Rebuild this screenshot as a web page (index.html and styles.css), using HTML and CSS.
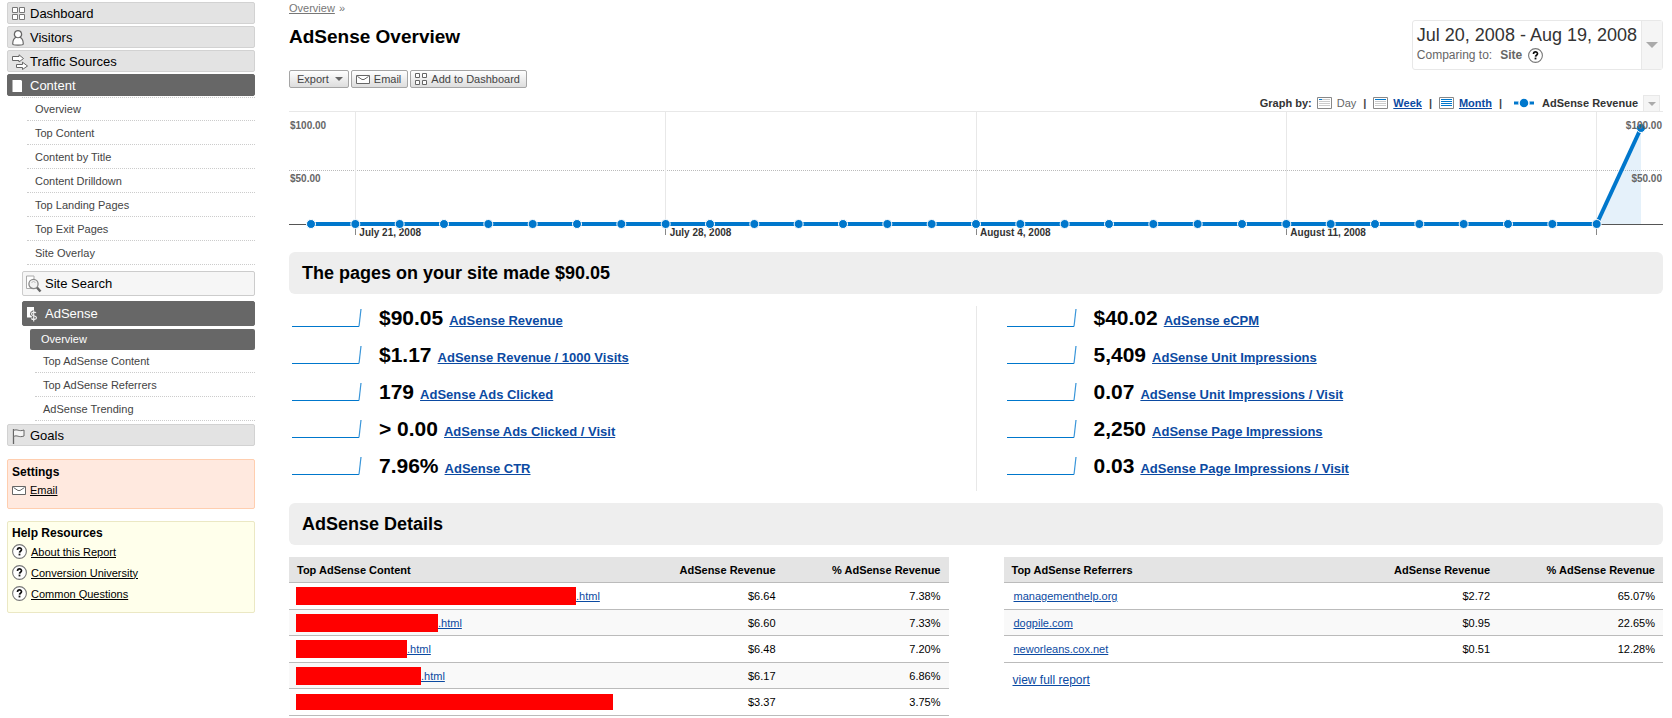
FILE: index.html
```html
<!DOCTYPE html>
<html lang="en">
<head>
<meta charset="utf-8">
<title>AdSense Overview</title>
<link rel="stylesheet" href="styles.css">
</head>
<body>
<svg class="defs" aria-hidden="true">
  <symbol id="i-grid" viewBox="0 0 12 12"><path d="M.5 .5h4v4h-4zM7.500 .5h4v4h-4zM.5 7.500h4v4h-4zM7.500 7.500h4v4h-4z" fill="#fff" stroke="#666"/></symbol>
  <symbol id="i-mail" viewBox="0 0 14 9"><path d="M.5 .5h13v8H.5z" fill="#fff" stroke="#666"/><path d="M1.500 1.500L6 4.500h2L12.500 1.500" fill="none" stroke="#666"/></symbol>
  <symbol id="i-help" viewBox="0 0 15 15"><circle cx="7.500" cy="7.500" r="6.900" fill="#fff" stroke="#777" stroke-width="1.100"/><path d="M5.500 6.100c0-2.900 4-2.700 4-.3 0 1.400-1.900 1.400-2 2.800" fill="none" stroke="#111" stroke-width="1.700"/><path d="M6.600 9.600h1.800v1.800H6.600z" fill="#111"/></symbol>
  <symbol id="i-spark" viewBox="0 0 70 18"><path d="M0 17.500h67" fill="none" stroke="#0077cc"/><path d="M67 17.500L69 0" fill="none" stroke="#3a96d9" stroke-width="1.200"/></symbol>
</svg>
<div class="page">
  <aside class="sidebar">
    <nav class="nav">
      <a class="nav-item" href="#"><svg class="ico" viewBox="0 0 16 16"><path d="M.5 1.500h5v5h-5zM7.500 1.500h5v5h-5zM.5 8.500h5v5h-5zM7.500 8.500h5v5h-5z" fill="#fff" stroke="#777"/></svg>Dashboard</a>
      <a class="nav-item" href="#"><svg class="ico" viewBox="0 0 16 16"><path d="M.7 14C.7 10 2 8.200 4 7.300 1 5 2.500 .7 6 .7S11 5 8 7.300C10 8.200 11.300 10 11.300 14c0 1.500-10.600 1.500-10.600 0z" fill="#fff" stroke="#666" stroke-width="1.200"/><path d="M4 7.300q2 1 4 0" fill="none" stroke="#666"/></svg>Visitors</a>
      <a class="nav-item" href="#"><svg class="ico" viewBox="0 0 16 16"><path d="M.5 2.500H7V.8L11.500 4.500 7 8V6.500H.5zM4.500 10.500h6V8.200l5 3.800-5 3.500v-2h-6z" fill="#fff" stroke="#666"/></svg>Traffic Sources</a>
      <a class="nav-item dark" href="#"><svg class="ico" viewBox="0 0 16 16"><path d="M.5 2H9l1 1v11H.5z" fill="#fff"/></svg>Content</a>
      <ul class="subnav">
        <li><a href="#">Overview</a></li>
        <li><a href="#">Top Content</a></li>
        <li><a href="#">Content by Title</a></li>
        <li><a href="#">Content Drilldown</a></li>
        <li><a href="#">Top Landing Pages</a></li>
        <li><a href="#">Top Exit Pages</a></li>
        <li><a href="#">Site Overlay</a></li>
      </ul>
      <a class="sub-item" href="#"><svg class="ico" viewBox="0 0 16 18"><path d="M.5 1h7.500v12.500H.5z" fill="#fff" stroke="#aaa"/><path d="M10.500 12l4 4.500" stroke="#666" stroke-width="2.500"/><circle cx="7.500" cy="9" r="4.600" fill="#f2f2f2" stroke="#888" stroke-width="1.300"/><path d="M5.500 7.500q2-2 4 0" fill="none" stroke="#bbb"/></svg>Site Search</a>
      <a class="sub-item dark" href="#"><svg class="ico" viewBox="0 0 16 18"><path d="M1 2h7v10.500H1z" fill="#fff"/><path d="M7.500 5.500v11M9.800 7.700C8.500 6.500 5.300 7 5.300 8.900c0 2.400 5 1.300 5 3.800 0 2-3.700 2.400-5.200.8" fill="none" stroke="#666" stroke-width="2.600"/><path d="M7.700 5.500v11M10 7.700C8.700 6.500 5.500 7 5.500 8.900c0 2.400 5 1.300 5 3.800 0 2-3.700 2.400-5.200.8" fill="none" stroke="#eee" stroke-width="1.200"/></svg>AdSense</a>
      <a class="leaf-current" href="#">Overview</a>
      <ul class="subnav deep">
        <li><a href="#">Top AdSense Content</a></li>
        <li><a href="#">Top AdSense Referrers</a></li>
        <li><a href="#">AdSense Trending</a></li>
      </ul>
      <a class="nav-item" href="#"><svg class="ico" viewBox="0 0 16 16"><path d="M1.500 1v15" stroke="#666" stroke-width="1.300"/><path d="M1.500 2.500c4-2 5 1.500 10.500-.5v6c-5.500 2-6.500-1.500-10.500.5z" fill="#f4f4f4" stroke="#666"/></svg>Goals</a>
    </nav>
    <section class="box settings">
      <h2>Settings</h2>
      <p><svg class="mail"><use href="#i-mail"/></svg><a href="#">Email</a></p>
    </section>
    <section class="box help">
      <h2>Help Resources</h2>
      <p><svg class="q"><use href="#i-help"/></svg><a href="#">About this Report</a></p>
      <p><svg class="q"><use href="#i-help"/></svg><a href="#">Conversion University</a></p>
      <p><svg class="q"><use href="#i-help"/></svg><a href="#">Common Questions</a></p>
    </section>
  </aside>

  <main class="main">
    <header class="head">
      <div>
        <div class="crumbs"><a href="#">Overview</a> »</div>
        <h1>AdSense Overview</h1>
        <div class="actions">
          <button type="button" class="export">Export<span class="tri"></span></button>
          <button type="button"><svg class="mail"><use href="#i-mail"/></svg>Email</button>
          <button type="button"><svg class="grid-ico"><use href="#i-grid"/></svg>Add to Dashboard</button>
        </div>
      </div>
      <div class="range">
        <div class="range-text">
          <div class="range-dates">Jul 20, 2008 - Aug 19, 2008</div>
          <div class="range-compare">Comparing to: <b>Site</b><svg class="q"><use href="#i-help"/></svg></div>
        </div>
        <button type="button" aria-label="Change date range"><span class="tri"></span></button>
      </div>
    </header>

    <div class="graph-bar">
      <b>Graph by:</b>
      <svg class="cal" viewBox="0 0 15 12"><path d="M.5 .5h14v11H.5z" fill="#fff" stroke="#888"/><path d="M2 4.500h11M2 6.500h11M2 8.500h11M5 2.500h8" stroke="#ccc"/><path d="M2 2.500h3" stroke="#07c"/></svg>
      <span class="day">Day</span><b class="bar">|</b>
      <svg class="cal" viewBox="0 0 15 12"><path d="M.5 .5h14v11H.5z" fill="#fff" stroke="#888"/><path d="M2 4.500h11M2 6.500h11M2 8.500h11" stroke="#ccc"/><path d="M2 2.500h11" stroke="#07c"/></svg>
      <a href="#">Week</a><b class="bar">|</b>
      <svg class="cal" viewBox="0 0 15 12"><path d="M.5 .5h14v11H.5z" fill="#fff" stroke="#888"/><path d="M2 2.500h11M2 4.500h11M2 6.500h11M2 8.500h11" stroke="#07c"/></svg>
      <a href="#">Month</a><b class="bar">|</b>
      <svg class="legend" viewBox="0 0 20 10"><path d="M0 5h20" stroke="#07c" stroke-width="3"/><circle cx="10" cy="5" r="5" fill="#07c" stroke="#fff" stroke-width="1.500"/></svg>
      <b class="metric">AdSense Revenue</b>
      <button type="button" aria-label="Choose metric"><span class="tri"></span></button>
    </div>

    <div class="chart">
      <svg class="frame">
        <line x1="0" x2="100%" y1="58.500" y2="58.500" stroke="#bbb" stroke-dasharray="1 1"/>
        <line x1="0" x2="100%" y1="112.500" y2="112.500" stroke="#555"/>
      </svg>
      <svg class="plot">
        <g stroke="#e8e8e8" class="crisp">
          <line x1="3.333%" x2="3.333%" y1="0" y2="112"/><line x1="26.667%" x2="26.667%" y1="0" y2="112"/><line x1="50%" x2="50%" y1="0" y2="112"/><line x1="73.333%" x2="73.333%" y1="0" y2="112"/><line x1="96.667%" x2="96.667%" y1="0" y2="112"/>
        </g>
        <g stroke="#888" class="crisp">
          <line x1="3.333%" x2="3.333%" y1="112" y2="123"/><line x1="26.667%" x2="26.667%" y1="112" y2="123"/><line x1="50%" x2="50%" y1="112" y2="123"/><line x1="73.333%" x2="73.333%" y1="112" y2="123"/><line x1="96.667%" x2="96.667%" y1="112" y2="123"/>
        </g>
        <g class="dates">
          <text x="3.333%" dx="4" y="124">July 21, 2008</text><text x="26.667%" dx="4" y="124">July 28, 2008</text><text x="50%" dx="4" y="124">August 4, 2008</text><text x="73.333%" dx="4" y="124">August 11, 2008</text>
        </g>
        <svg x="0" y="0" width="100%" height="113" viewBox="0 0 30 113" preserveAspectRatio="none"><path d="M29 112L30 17V112z" fill="#07c" fill-opacity=".1"/></svg>
        <line class="crisp" x1="0" x2="96.667%" y1="112" y2="112" stroke="#07c" stroke-width="4"/>
        <line x1="96.667%" x2="100%" y1="112" y2="16" stroke="#07c" stroke-width="4"/>
        <g class="dots">
          <circle cx="0" cy="112" r="4.500"/><circle cx="3.333%" cy="112" r="4.500"/><circle cx="6.667%" cy="112" r="4.500"/><circle cx="10%" cy="112" r="4.500"/><circle cx="13.333%" cy="112" r="4.500"/><circle cx="16.667%" cy="112" r="4.500"/><circle cx="20%" cy="112" r="4.500"/><circle cx="23.333%" cy="112" r="4.500"/><circle cx="26.667%" cy="112" r="4.500"/><circle cx="30%" cy="112" r="4.500"/><circle cx="33.333%" cy="112" r="4.500"/><circle cx="36.667%" cy="112" r="4.500"/><circle cx="40%" cy="112" r="4.500"/><circle cx="43.333%" cy="112" r="4.500"/><circle cx="46.667%" cy="112" r="4.500"/><circle cx="50%" cy="112" r="4.500"/><circle cx="53.333%" cy="112" r="4.500"/><circle cx="56.667%" cy="112" r="4.500"/><circle cx="60%" cy="112" r="4.500"/><circle cx="63.333%" cy="112" r="4.500"/><circle cx="66.667%" cy="112" r="4.500"/><circle cx="70%" cy="112" r="4.500"/><circle cx="73.333%" cy="112" r="4.500"/><circle cx="76.667%" cy="112" r="4.500"/><circle cx="80%" cy="112" r="4.500"/><circle cx="83.333%" cy="112" r="4.500"/><circle cx="86.667%" cy="112" r="4.500"/><circle cx="90%" cy="112" r="4.500"/><circle cx="93.333%" cy="112" r="4.500"/><circle cx="96.667%" cy="112" r="4.500"/><circle cx="100%" cy="16" r="4.500"/>
        </g>
      </svg>
      <svg class="frame scale">
        <text x="1" y="17">$100.00</text><text x="1" y="70">$50.00</text>
        <text x="100%" dx="-1" y="17" text-anchor="end">$100.00</text><text x="100%" dx="-1" y="70" text-anchor="end">$50.00</text>
      </svg>
    </div>

    <h2 class="band">The pages on your site made $90.05</h2>
    <div class="stats">
      <ul>
        <li><svg class="spark"><use href="#i-spark"/></svg><strong>$90.05</strong><a href="#">AdSense Revenue</a></li>
        <li><svg class="spark"><use href="#i-spark"/></svg><strong>$1.17</strong><a href="#">AdSense Revenue / 1000 Visits</a></li>
        <li><svg class="spark"><use href="#i-spark"/></svg><strong>179</strong><a href="#">AdSense Ads Clicked</a></li>
        <li><svg class="spark"><use href="#i-spark"/></svg><strong>&gt; 0.00</strong><a href="#">AdSense Ads Clicked / Visit</a></li>
        <li><svg class="spark"><use href="#i-spark"/></svg><strong>7.96%</strong><a href="#">AdSense CTR</a></li>
      </ul>
      <div class="divider"></div>
      <ul>
        <li><svg class="spark"><use href="#i-spark"/></svg><strong>$40.02</strong><a href="#">AdSense eCPM</a></li>
        <li><svg class="spark"><use href="#i-spark"/></svg><strong>5,409</strong><a href="#">AdSense Unit Impressions</a></li>
        <li><svg class="spark"><use href="#i-spark"/></svg><strong>0.07</strong><a href="#">AdSense Unit Impressions / Visit</a></li>
        <li><svg class="spark"><use href="#i-spark"/></svg><strong>2,250</strong><a href="#">AdSense Page Impressions</a></li>
        <li><svg class="spark"><use href="#i-spark"/></svg><strong>0.03</strong><a href="#">AdSense Page Impressions / Visit</a></li>
      </ul>
    </div>

    <h2 class="band">AdSense Details</h2>
    <div class="tables">
      <table>
        <thead><tr><th>Top AdSense Content</th><th>AdSense Revenue</th><th>% AdSense Revenue</th></tr></thead>
        <tbody>
          <tr><td><div class="masked"><span class="mask" style="width:280px"></span><a href="#">.html</a></div></td><td>$6.64</td><td>7.38%</td></tr>
          <tr><td><div class="masked"><span class="mask" style="width:142px"></span><a href="#">.html</a></div></td><td>$6.60</td><td>7.33%</td></tr>
          <tr><td><div class="masked"><span class="mask" style="width:111px"></span><a href="#">.html</a></div></td><td>$6.48</td><td>7.20%</td></tr>
          <tr><td><div class="masked"><span class="mask" style="width:125px"></span><a href="#">.html</a></div></td><td>$6.17</td><td>6.86%</td></tr>
          <tr><td><div class="masked"><span class="mask short" style="width:317px"></span></div></td><td>$3.37</td><td>3.75%</td></tr>
        </tbody>
      </table>
      <div>
        <table>
          <thead><tr><th>Top AdSense Referrers</th><th>AdSense Revenue</th><th>% AdSense Revenue</th></tr></thead>
          <tbody>
            <tr><td><a href="#">managementhelp.org</a></td><td>$2.72</td><td>65.07%</td></tr>
            <tr><td><a href="#">dogpile.com</a></td><td>$0.95</td><td>22.65%</td></tr>
            <tr><td><a href="#">neworleans.cox.net</a></td><td>$0.51</td><td>12.28%</td></tr>
          </tbody>
        </table>
        <a class="full" href="#">view full report</a>
      </div>
    </div>
  </main>
</div>
</body>
</html>
```
FILE: styles.css
```css
* { box-sizing: border-box; }
body {
  margin: 0;
  background: #fff;
  color: #000;
  font: 11px/16px "Liberation Sans", Arial, sans-serif;
}
h1, h2, p, ul { margin: 0; padding: 0; }
ul { list-style: none; }
svg { display: block; flex: none; }
button { font: inherit; cursor: pointer; }
a { color: #0b4aa2; }
.defs { position: absolute; width: 0; height: 0; }

.page {
  display: grid;
  grid-template-columns: 248px minmax(0, 1fr);
  column-gap: 34px;
  padding: 0 9px 0 7px;
}

/* Sidebar */
.sidebar { padding-top: 2px; }
.nav { display: flex; flex-direction: column; }
.nav-item, .sub-item {
  display: flex;
  align-items: center;
  color: #000;
  font-size: 13px;
  text-decoration: none;
  border: 1px solid #d2d2d2;
  border-radius: 2px;
}
.nav-item {
  height: 22px;
  margin-bottom: 2px;
  padding: 1px 4px 0;
  gap: 2px;
  background: #e3e3e3;
}
.sub-item {
  height: 25px;
  margin: 0 0 5px 15px;
  padding: 0 3px;
  gap: 3px;
  background: #f6f6f6;
  border-color: #ccc;
}
.nav-item.dark, .sub-item.dark {
  background: #676767;
  border-color: #676767;
  color: #fff;
}
.nav-item.dark { margin-bottom: 1px; }
.sub-item.dark { margin-bottom: 3px; }
.ico { width: 16px; height: 16px; }
.sub-item .ico { height: 18px; }
.subnav {
  margin: 0 0 6px 15px;
  border-top: 1px dotted #ccc;
}
.subnav li {
  height: 24px;
  margin-left: 5px;
  padding-left: 8px;
  border-bottom: 1px dotted #ccc;
  line-height: 24px;
}
.subnav li:first-child { height: 23px; line-height: 23px; }
.subnav a { color: #444; text-decoration: none; }
.leaf-current {
  height: 21px;
  margin-left: 23px;
  padding-left: 11px;
  border-radius: 2px;
  background: #676767;
  color: #fff;
  line-height: 21px;
  text-decoration: none;
}
.subnav.deep { margin: 0 0 3px 23px; border-top: 0; }

.box {
  margin-top: 11px;
  padding: 4px;
  border: 1px solid;
  border-radius: 2px;
}
.box h2 { font-size: 12px; line-height: 16px; }
.box p { display: flex; align-items: center; }
.box a { color: #000; }
.settings { padding-bottom: 8px; background: #ffe9df; border-color: #ffceaf; }
.settings p { height: 20px; gap: 4px; }
.help { margin-top: 12px; padding-bottom: 8px; background: #ffffeb; border-color: #ebe8c4; }
.help h2 { line-height: 15px; }
.help p { height: 21px; gap: 4px; }
.mail { width: 14px; height: 9px; }
.q { width: 15px; height: 15px; }

/* Page header */
.head { display: flex; justify-content: space-between; align-items: flex-start; }
.crumbs { color: #777; }
.crumbs a { color: #777; margin-right: 1px; }
h1 { margin-top: 9px; font-size: 19px; line-height: 24px; }
.actions { display: flex; gap: 2px; margin-top: 21px; }
.actions button {
  display: flex;
  align-items: center;
  gap: 4px;
  height: 18px;
  padding: 0 6px 0 4px;
  border: 1px solid #a5a5a5;
  border-radius: 2px;
  background: linear-gradient(#fff, #ddd);
  color: #444;
}
.actions .export { gap: 6px; padding: 0 5px 0 7px; }
.grid-ico { width: 12px; height: 12px; }
.tri {
  border: 4px solid transparent;
  border-top-color: #666;
  border-bottom: 0;
}
.range {
  display: flex;
  margin-top: 20px;
  height: 50px;
  border: 1px solid #e8e8e8;
  border-radius: 3px;
}
.range-text { padding: 4px 4px 0; }
.range-dates { color: #333; font-size: 18px; line-height: 20px; }
.range-compare { display: flex; align-items: center; gap: 6px; color: #666; font-size: 12px; line-height: 20px; }
.range-compare b { margin-left: 2px; }
.range button, .graph-bar button {
  display: flex;
  align-items: center;
  justify-content: center;
  padding: 0;
  border: 0;
  background: #f5f5f5;
}
.range button { width: 21px; border-left: 1px solid #e8e8e8; }
.range .tri { border-width: 6px 6px 0; border-top-color: #aaa; }

/* Chart */
.graph-bar {
  display: flex;
  align-items: center;
  justify-content: flex-end;
  height: 16px;
  margin-top: 7px;
  padding-right: 3px;
  gap: 5px;
  color: #333;
}
.graph-bar a { font-weight: bold; }
.cal { width: 15px; height: 12px; }
.day { color: #666; }
.bar { margin: 0 2px; color: #444; }
.legend { width: 20px; height: 10px; margin-left: 5px; }
.metric { margin-left: 3px; }
.graph-bar button { width: 17px; height: 16px; border: 1px solid #e8e8e8; border-bottom: 0; }
.graph-bar .tri { border-top-color: #aaa; }
.chart {
  display: grid;
  height: 126px;
  margin-bottom: 15px;
  border-top: 1px solid #e8e8e8;
}
.chart > svg { grid-area: 1 / 1; overflow: visible; height: 125px; }
.frame { width: 100%; }
.plot { width: calc(100% - 44px); margin-left: 22px; }
.chart text { font-size: 10px; font-weight: bold; }
.dates { fill: #333; }
.scale { fill: #666; }
.crisp { shape-rendering: crispEdges; }
.dots { fill: #07c; stroke: #fff; }

/* Summary */
.band {
  padding: 0 13px;
  border-radius: 6px;
  background: #eee;
  font-size: 18px;
  line-height: 42px;
}
.stats {
  display: grid;
  grid-template-columns: 1fr 1px 1fr;
  column-gap: 27px;
  margin: 12px 0;
}
.divider { background: #e8e8e8; }
.stats li { display: flex; align-items: baseline; height: 37px; padding-left: 3px; }
.spark { width: 70px; height: 18px; align-self: flex-start; margin: 3px 17px 0 0; }
.stats strong { margin-right: 6px; font-size: 21px; line-height: 24px; }
.stats a { font-size: 13px; font-weight: bold; }

/* Detail tables */
.tables {
  display: grid;
  grid-template-columns: 1fr 1fr;
  align-items: start;
  column-gap: 55px;
  margin-top: 12px;
}
table { width: 100%; table-layout: fixed; border-collapse: separate; border-spacing: 0; }
th, td { border-bottom: 1px solid #bbb; text-align: right; }
th { height: 26px; padding: 0 8px; background: #e4e4e4; }
td { height: 27px; padding: 0 8px; }
th:nth-child(n+2) { width: 165px; }
th:first-child { text-align: left; }
td:first-child { padding-left: 10px; text-align: left; }
tr:nth-child(even) td { height: 26px; background: #f9f9f9; }
.masked { display: flex; align-items: center; margin-left: -3px; }
.mask { flex: none; height: 18px; background: #f00; }
.mask.short { height: 16px; }
.full { display: inline-block; margin: 9px 0 0 9px; font-size: 12px; }
```
